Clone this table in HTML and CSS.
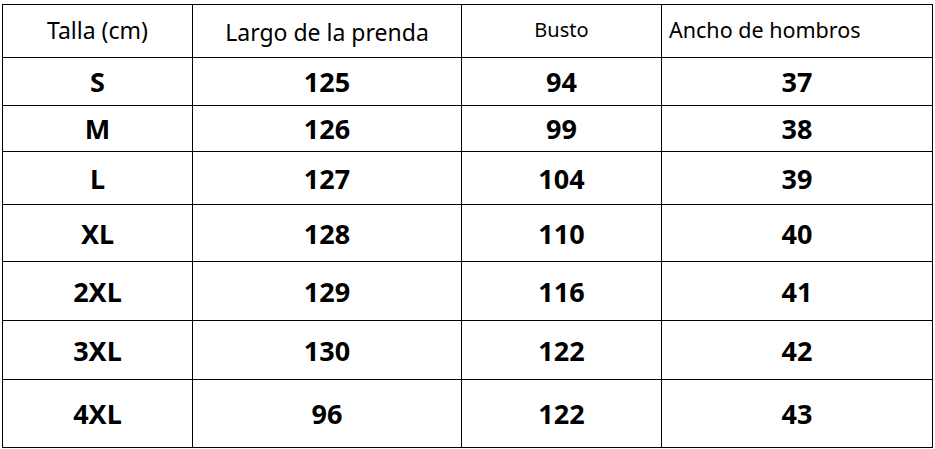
FILE: index.html
```html
<!DOCTYPE html>
<html lang="es">
<head>
<meta charset="utf-8">
<title>Tabla de tallas</title>
<link rel="stylesheet" href="styles.css">
</head>
<body>
<div class="page">
  <div class="size-table">
    <div class="cell head h1">Talla (cm)</div>
    <div class="cell head h2">Largo de la prenda</div>
    <div class="cell head h3">Busto</div>
    <div class="cell head h4">Ancho de hombros</div>

    <div class="cell">S</div><div class="cell">125</div><div class="cell">94</div><div class="cell">37</div>
    <div class="cell">M</div><div class="cell">126</div><div class="cell">99</div><div class="cell">38</div>
    <div class="cell">L</div><div class="cell">127</div><div class="cell">104</div><div class="cell">39</div>
    <div class="cell">XL</div><div class="cell">128</div><div class="cell">110</div><div class="cell">40</div>
    <div class="cell">2XL</div><div class="cell">129</div><div class="cell">116</div><div class="cell">41</div>
    <div class="cell">3XL</div><div class="cell">130</div><div class="cell">122</div><div class="cell">42</div>
    <div class="cell">4XL</div><div class="cell">96</div><div class="cell">122</div><div class="cell">43</div>
  </div>
</div>
</body>
</html>
```

FILE: styles.css
```css
* { box-sizing: border-box; }
html, body { margin: 0; padding: 0; background: #fff; }
body { font-family: "Noto Sans", "Open Sans", sans-serif; color: #000; }

.page {
  padding: 4px 0 0 2px;
}

.size-table {
  display: grid;
  grid-template-columns: 190px 269px 200px 271px;
  grid-template-rows: 53px 48px 46px 53px 57px 59px 59px 68px;
  width: max-content;
  border-top: 1px solid #000;
  border-left: 1px solid #000;
}

.cell {
  display: flex;
  align-items: center;
  justify-content: center;
  border-right: 1px solid #000;
  border-bottom: 1px solid #000;
  font-weight: 700;
  font-size: 27px;
  line-height: 1;
}

.head {
  font-weight: 400;
  font-size: 23px;
}

.h1 { padding-bottom: 2px; }
.h2 { padding-top: 3px; }
.h3 { font-size: 20px; padding-bottom: 3px; }
.h4 { font-size: 21.5px; padding-bottom: 3px; justify-content: flex-start; padding-left: 7px; }
```
